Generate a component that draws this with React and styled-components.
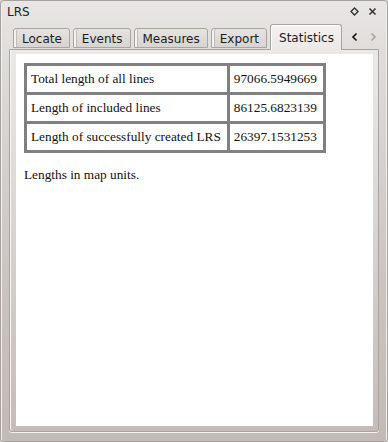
import React from "react";
import styled, { createGlobalStyle } from "styled-components";

const GlobalStyle = createGlobalStyle`
  html, body {
    margin: 0;
    padding: 0;
    background: #d9d5d2;
  }
`;

const tabs = ["Locate", "Events", "Measures", "Export", "Statistics"];

const stats = [
  { label: "Total length of all lines", value: "97066.5949669" },
  { label: "Length of included lines", value: "86125.6823139" },
  { label: "Length of successfully created LRS", value: "26397.1531253" },
];

const App = () => {
  return (
    <>
      <GlobalStyle />
      <Window>
        <TitleBar>
          <Title>LRS</Title>
          <TitleButtons>
            <svg width="9" height="9" viewBox="0 0 9 9">
              <path d="M4.5 1 L8 4.5 L4.5 8 L1 4.5 Z" fill="none" stroke="#333" strokeWidth="1.4" />
            </svg>
            <svg width="9" height="9" viewBox="0 0 9 9">
              <path d="M1.5 1.5 L7.5 7.5 M7.5 1.5 L1.5 7.5" stroke="#333" strokeWidth="1.5" />
            </svg>
          </TitleButtons>
        </TitleBar>
        <TabBar>
          <Tabs>
            {tabs.map((t) => (
              <Tab key={t} active={t === "Statistics"}>
                {t}
              </Tab>
            ))}
          </Tabs>
          <Scrollers>
            <svg width="10" height="10" viewBox="0 0 10 10">
              <path d="M6.5 1.5 L3 5 L6.5 8.5" fill="none" stroke="#111" strokeWidth="1.6" />
            </svg>
            <svg width="10" height="10" viewBox="0 0 10 10">
              <path d="M3.5 1.5 L7 5 L3.5 8.5" fill="none" stroke="#a9a5a2" strokeWidth="1.6" />
            </svg>
          </Scrollers>
        </TabBar>
        <Pane>
          <Browser>
            <StatsTable>
              <tbody>
                {stats.map((s) => (
                  <tr key={s.label}>
                    <Cell>{s.label}</Cell>
                    <Cell>{s.value}</Cell>
                  </tr>
                ))}
              </tbody>
            </StatsTable>
            <Note>Lengths in map units.</Note>
          </Browser>
        </Pane>
      </Window>
    </>
  );
};

const Window = styled.div`
  width: 388px;
  height: 442px;
  box-sizing: border-box;
  display: flex;
  flex-direction: column;
  border: 1px solid #a7a19d;
  border-radius: 4px 4px 3px 3px;
  background: linear-gradient(to bottom, #e9e7e5 0px, #dedbd8 60px, #c9c2be 300px, #c2bab6 442px);
  box-shadow: inset 1px 0 0 #f2f0ee, inset -1px 0 0 #f2f0ee;
  font-family: "DejaVu Sans", sans-serif;
  overflow: hidden;
`;

const TitleBar = styled.div`
  height: 22px;
  display: flex;
  align-items: center;
  justify-content: space-between;
  padding: 0 10px 0 6px;
  flex-shrink: 0;
`;

const Title = styled.span`
  font-size: 12px;
  color: #222;
`;

const TitleButtons = styled.div`
  display: flex;
  gap: 9px;
  align-items: center;
  margin-top: -2px;
`;

const TabBar = styled.div`
  height: 26px;
  display: flex;
  align-items: flex-end;
  justify-content: space-between;
  padding: 0 9px 0 12px;
  flex-shrink: 0;
  position: relative;
  z-index: 1;
`;

const Tabs = styled.div`
  display: flex;
  gap: 3px;
  align-items: flex-end;
`;

const Tab = styled.div`
  box-sizing: border-box;
  height: ${(p) => (p.active ? "26px" : "20px")};
  padding: 0 7px 0 8px;
  margin-bottom: ${(p) => (p.active ? "-1px" : "1px")};
  display: flex;
  align-items: center;
  font-size: 12px;
  color: #1c1c1c;
  border: 1px solid #aba5a1;
  border-bottom: ${(p) => (p.active ? "none" : "1px solid #aba5a1")};
  border-radius: 3px 3px 0 0;
  background: ${(p) =>
    p.active
      ? "linear-gradient(to bottom, #f3f2f1, #ebe9e7)"
      : "linear-gradient(to bottom, #e6e3e0, #d8d4d0)"};
  box-shadow: ${(p) =>
    p.active ? "inset 1px 1px 0 #ffffff" : "inset 2px 0 0 #f4f2f0, inset 3px 0 0 #c2bdb9"};
  padding-top: ${(p) => (p.active ? "0" : "1px")};
`;

const Scrollers = styled.div`
  display: flex;
  gap: 8px;
  align-items: center;
  height: 22px;
  margin-bottom: 1px;
`;

const Pane = styled.div`
  flex: 1;
  margin: 0 8px 9px 8px;
  display: flex;
  padding: 4px 5px 5px 6px;
  border: 1px solid #aaa4a0;
  border-radius: 0 0 3px 3px;
  background: linear-gradient(to bottom, #ebe9e7, #c4bcb8);
  box-shadow: inset 1px 0 0 #f6f5f4, 0 1px 0 #f4f2f0;
`;

const Browser = styled.div`
  flex: 1;
  background: #ffffff;
  padding: 9px 8px;
  font-family: "Liberation Serif", "Times New Roman", serif;
  font-size: 13.3px;
  color: #111;
`;

const StatsTable = styled.table`
  border-collapse: collapse;
  border: 3px solid #808080;
`;

const Cell = styled.td`
  border: 3px solid #808080;
  padding: 5px 6px 5px 4px;
  line-height: 16px;
  white-space: nowrap;
`;

const Note = styled.p`
  margin: 14px 0 0 0;
  line-height: 16px;
`;

export default App;
